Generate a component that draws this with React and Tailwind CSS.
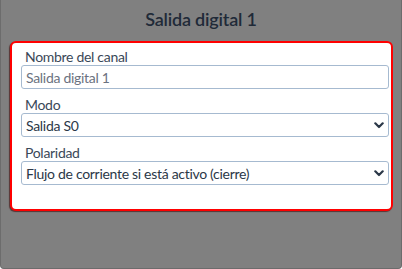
import React from 'react';

const Chevron = () => (
  <svg width="10" height="7" viewBox="0 0 10 7" className="shrink-0">
    <path d="M1.3 1.3 L5 5 L8.7 1.3" fill="none" stroke="#2b3848" strokeWidth="2.2" strokeLinecap="round" strokeLinejoin="round" />
  </svg>
);

const Field = ({ label, children, first = false }) => (
  <div className={first ? '' : 'mt-[7px]'}>
    <div className="text-[14px] leading-[17px] tracking-[-0.3px] text-[#3a4858] pl-[4px]">{label}</div>
    {children}
  </div>
);

const SelectBox = ({ value }) => (
  <div className="h-[24px] flex items-center justify-between border border-[#a6bad0] rounded-[3px] bg-white pl-[4px] pr-[4px] text-[14px] tracking-[-0.3px] text-[#2b3848]">
    <span>{value}</span>
    <Chevron />
  </div>
);

export default function App() {
  return (
    <div
      className="w-[402px] h-[269px] bg-[#808080] border-x border-b border-[#6c6c6c] rounded-b-[4px] flex flex-col"
      style={{ fontFamily: 'Lato, "Open Sans", sans-serif' }}
    >
      <div className="h-[41px] flex items-center justify-center pb-[3px]">
        <h1 className="text-[18px] font-semibold tracking-[-0.2px] text-[#1f2a38]">Salida digital 1</h1>
      </div>
      <div className="ml-[9px] w-[383px] bg-white border-2 border-[#ff0000] rounded-[6px] shadow-[-1px_1px_1px_rgba(60,0,0,0.6)] pt-[5px] pb-[24px] pl-[9px] pr-[2px]">
        <Field label="Nombre del canal" first>
          <div className="h-[24px] flex items-center border border-[#a6bad0] rounded-[3px] bg-white pl-[4px] text-[14px] tracking-[-0.3px] text-[#6b7280]">
            Salida digital 1
          </div>
        </Field>
        <Field label="Modo">
          <SelectBox value="Salida S0" />
        </Field>
        <Field label="Polaridad">
          <SelectBox value="Flujo de corriente si está activo (cierre)" />
        </Field>
      </div>
    </div>
  );
}
